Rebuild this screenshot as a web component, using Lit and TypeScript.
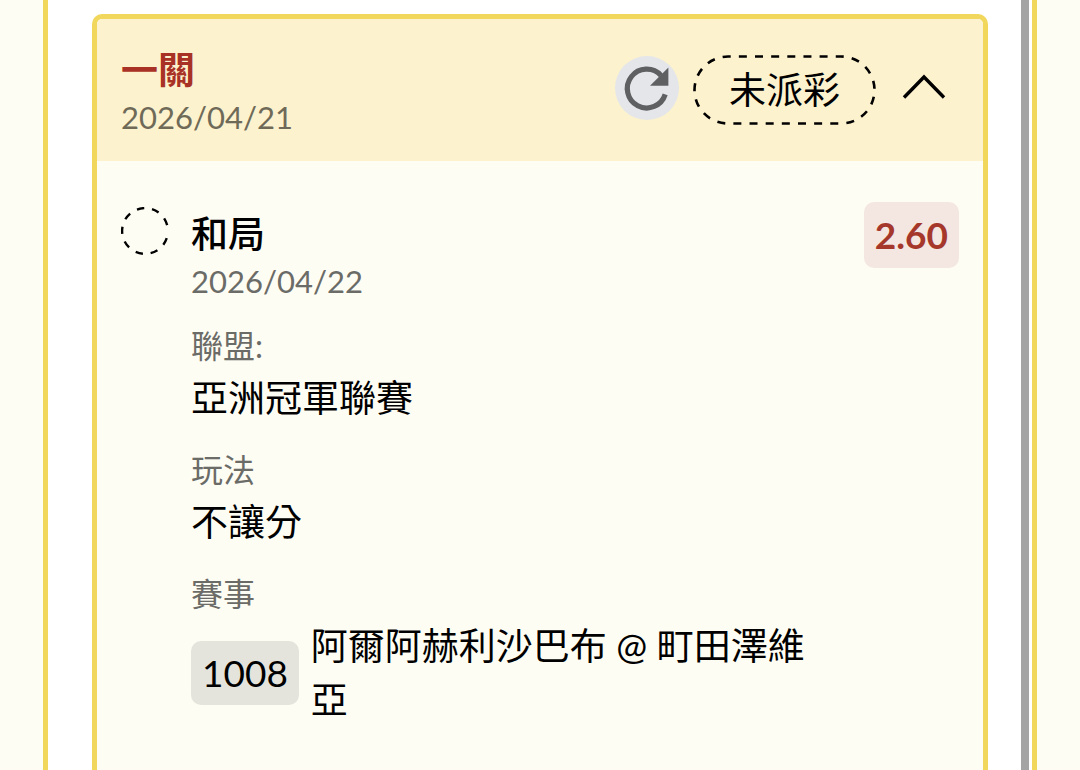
import { LitElement, html, css } from "lit";
import { customElement, state } from "lit/decorators.js";

interface Field {
  label: string;
  value: string;
}

@customElement("bet-card")
class BetCard extends LitElement {
  static styles = css`
    :host {
      display: flex;
      flex: 1;
      min-width: 0;
    }
    .card {
      flex: 1;
      min-width: 0;
      box-sizing: border-box;
      border: 5px solid #f1d75c;
      border-bottom: 0;
      border-radius: 10px 10px 0 0;
      background: #fefdf4;
      overflow: hidden;
    }
    .head {
      display: flex;
      align-items: center;
      gap: 14px;
      padding: 24px;
      background: #fdf2ce;
    }
    .heading {
      flex: 1;
      min-width: 0;
    }
    h2,
    h3,
    dl,
    dt,
    dd {
      margin: 0;
    }
    .title {
      font-size: 37px;
      line-height: 54px;
      font-weight: 700;
      color: #a93226;
    }
    .pick {
      font-size: 37px;
      line-height: 54px;
      font-weight: 500;
      color: #000;
    }
    .date {
      display: block;
      font-size: 31px;
      line-height: 40px;
      color: #6f6a58;
    }
    .leg .date {
      color: #6b6b67;
    }
    button {
      border: 0;
      padding: 0;
      margin: 0;
      font: inherit;
      color: inherit;
      cursor: pointer;
      display: flex;
      align-items: center;
      justify-content: center;
      flex: none;
    }
    .refresh {
      width: 64px;
      height: 64px;
      border-radius: 50%;
      background: #e4e6e9;
      margin-bottom: 4px;
    }
    .toggle {
      width: 69px;
      height: 64px;
      background: none;
      margin-bottom: 4px;
    }
    .status {
      position: relative;
      flex: none;
      padding: 8px 36px;
      font-size: 37px;
      line-height: 54px;
      color: #000;
    }
    .outline {
      position: absolute;
      inset: 0;
      width: 100%;
      height: 100%;
    }
    .outline rect {
      width: calc(100% - 3px);
      height: calc(100% - 3px);
    }
    .leg {
      display: flex;
      align-items: flex-start;
      gap: 22px;
      padding: 41px 24px;
    }
    .mark {
      flex: none;
      width: 48px;
      height: 48px;
      margin-top: 5px;
    }
    .info {
      flex: 1;
      min-width: 0;
      padding: 5px 12px 0 0;
    }
    .odds {
      flex: none;
      padding: 6px 11px;
      border-radius: 10px;
      background: #f4e7e1;
      color: #a5382b;
      font-size: 37px;
      line-height: 54px;
      font-weight: 700;
    }
    .field {
      margin-top: 20px;
    }
    dt {
      font-size: 32px;
      line-height: 50px;
      color: #6b6b67;
    }
    dd {
      font-size: 37px;
      line-height: 54px;
      color: #000;
    }
    .match {
      display: flex;
      align-items: center;
      gap: 12px;
    }
    .code {
      flex: none;
      padding: 5px 11px;
      border-radius: 10px;
      background: #e4e4dd;
    }
  `;

  @state() private open = true;

  private fields: Field[] = [
    { label: "聯盟:", value: "亞洲冠軍聯賽" },
    { label: "玩法", value: "不讓分" },
  ];

  private toggle() {
    this.open = !this.open;
  }

  render() {
    return html`
      <article class="card">
        <header class="head">
          <div class="heading">
            <h2 class="title">一關</h2>
            <time class="date" datetime="2026-04-21">2026/04/21</time>
          </div>
          <button class="refresh" type="button" aria-label="重新整理">
            <svg width="64" height="64" viewBox="0 0 64 64" aria-hidden="true">
              <path d="M46 19.4A19.4 19.4 0 1 0 50.2 38.4" fill="none" stroke="#5f6062" stroke-width="5.2" />
              <path d="M53.4 11.6V29.8H35z" fill="#5f6062" />
            </svg>
          </button>
          <span class="status">
            <svg class="outline" aria-hidden="true">
              <rect x="1.5" y="1.5" rx="33.5" fill="none" stroke="#000" stroke-width="2.6"
                stroke-dasharray="8 8.15" stroke-dashoffset="5.3" />
            </svg>
            未派彩
          </span>
          <button class="toggle" type="button" aria-label="收合" aria-expanded=${this.open} @click=${this.toggle}>
            <svg width="48" height="32" viewBox="0 0 48 32" aria-hidden="true">
              <path d="M3 25.5L23 5L43 25.5" fill="none" stroke="#000" stroke-width="3.4" />
            </svg>
          </button>
        </header>
        ${this.open ? this.renderLeg() : null}
      </article>
    `;
  }

  private renderLeg() {
    return html`
      <section class="leg">
        <svg class="mark" viewBox="0 0 48 48" aria-hidden="true">
          <circle cx="24" cy="24" r="22.9" fill="none" stroke="#000" stroke-width="2.4"
            pathLength="360" stroke-dasharray="18.5 20" stroke-dashoffset="-18.5" />
        </svg>
        <div class="info">
          <h3 class="pick">和局</h3>
          <time class="date" datetime="2026-04-22">2026/04/22</time>
          <dl>
            ${this.fields.map(
              (f) => html`<div class="field"><dt>${f.label}</dt><dd>${f.value}</dd></div>`
            )}
            <div class="field">
              <dt>賽事</dt>
              <dd class="match">
                <span class="code">1008</span>
                <span>阿爾阿赫利沙巴布 @ 町田澤維亞</span>
              </dd>
            </div>
          </dl>
        </div>
        <span class="odds">2.60</span>
      </section>
    `;
  }
}

@customElement("app-root")
class AppRoot extends LitElement {
  static styles = css`
    :host {
      display: block;
      height: 100vh;
      overflow: hidden;
      background: #fefdf4;
      font-family: Lato, "Noto Sans CJK TC", sans-serif;
    }
    .panel {
      display: flex;
      box-sizing: border-box;
      height: 100%;
      margin: 0 43px;
      border: solid #f1d75c;
      border-width: 0 5px;
      background: #fff;
    }
    .scroll {
      display: flex;
      flex: 1;
      min-width: 0;
      padding: 14px 33px 0 44px;
    }
    .bar {
      flex: none;
      width: 8px;
      margin-right: 3px;
      background: #a3a4a3;
    }
  `;

  render() {
    return html`
      <main class="panel">
        <div class="scroll"><bet-card></bet-card></div>
        <div class="bar"></div>
      </main>
    `;
  }
}
